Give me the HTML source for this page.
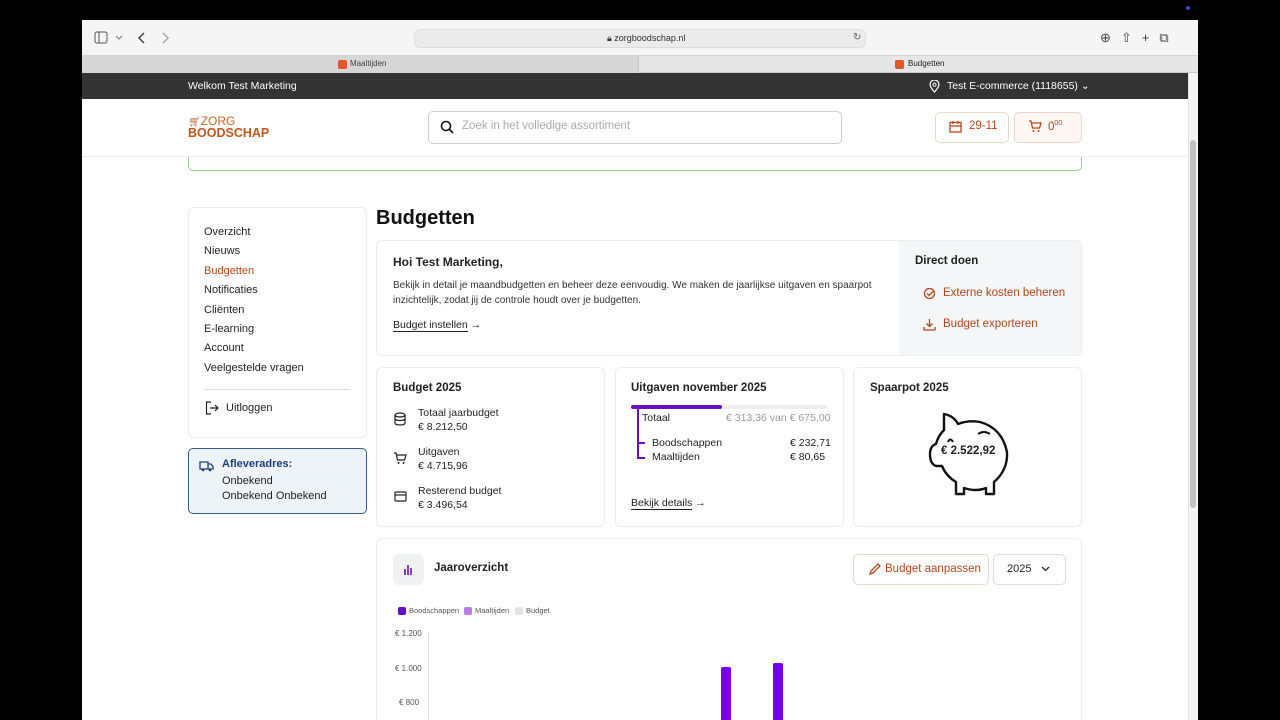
<!DOCTYPE html>
<html><head><meta charset="utf-8"><style>
*{box-sizing:border-box;margin:0;padding:0}
body{width:1280px;height:720px;background:#000;font-family:"Liberation Sans",sans-serif;color:#222;position:relative;overflow:hidden}
.a{position:absolute}
.win{left:82px;top:20px;width:1116px;height:700px;background:#fff;overflow:hidden}
.card{position:absolute;background:#fff;border:1px solid #ececec;border-radius:6px}
.t{font-size:11px}
.nav div{font-size:11px;height:19.4px;color:#222}
.or,.nav div.or{color:#b5451b}
svg{display:block}
</style></head><body>
<div class="a win">
 <div class="a" style="left:0;top:0;width:1116px;height:35px;background:#f5f5f5"></div>
 <svg class="a" style="left:12px;top:11px" width="40" height="14"><rect x="1" y="1" width="12" height="11" rx="2" fill="none" stroke="#555"/><line x1="5" y1="1" x2="5" y2="12" stroke="#555"/><path d="M22 5l3 3 3-3" stroke="#777" fill="none"/></svg>
 <svg class="a" style="left:54px;top:11px" width="36" height="14"><path d="M8 2L3 7l5 5" stroke="#444" stroke-width="1.5" fill="none"/><path d="M27 2l5 5-5 5" stroke="#aaa" stroke-width="1.5" fill="none"/></svg>
 <div class="a" style="left:332px;top:9px;width:452px;height:19px;background:#ebebeb;border-radius:6px;border:1px solid #ddd"></div>
 <div class="a" style="left:525px;top:13px;font-size:9px;color:#333">🔒︎ zorgboodschap.nl</div>
 <div class="a" style="left:771px;top:12px;font-size:10px;color:#666">↻</div>
 <div class="a" style="left:1018px;top:10px;font-size:13px;color:#444;letter-spacing:10px">⊕⇧+⧉</div>
 <div class="a" style="left:0;top:35px;width:1116px;height:18px;background:#e6e6e6;border-top:1px solid #d4d4d4;border-bottom:1px solid #ccc"></div>
 <div class="a" style="left:0;top:35px;width:557px;height:18px;background:#d6d6d6;border-right:1px solid #c8c8c8"></div>
 <div class="a" style="left:256px;top:40px;width:9px;height:9px;background:#e2572a;border-radius:2px"></div>
 <div class="a" style="left:268px;top:39px;font-size:8px;color:#444">Maaltijden</div>
 <div class="a" style="left:813px;top:40px;width:9px;height:9px;background:#e2572a;border-radius:2px"></div>
 <div class="a" style="left:826px;top:39px;font-size:8px;color:#222">Budgetten</div>
 <div class="a" style="left:0;top:53px;width:1106px;height:26px;background:#333"></div>
 <div class="a" style="left:106px;top:60px;font-size:10.5px;color:#fff">Welkom Test Marketing</div>
 <svg class="a" style="left:847px;top:60px" width="11" height="13"><path d="M5.5 12C2 8 1 6 1 4.5a4.5 4.5 0 0 1 9 0C10 6 9 8 5.5 12z" fill="none" stroke="#fff" stroke-width="1.2"/><circle cx="5.5" cy="4.7" r="1.6" fill="none" stroke="#fff"/></svg>
 <div class="a" style="left:865px;top:60px;font-size:10.5px;color:#fff">Test E-commerce (1118655) ⌄</div>
 <div class="a" style="left:1106px;top:53px;width:10px;height:647px;background:#f4f4f4;border-left:1px solid #e4e4e4"></div>
 <div class="a" style="left:1108px;top:120px;width:6px;height:368px;background:#c2c2c2;border-radius:3px"></div>
 <div class="a" style="left:0;top:79px;width:1106px;height:58px;background:#fff;border-bottom:1px solid #eee;z-index:2"></div>
 <div class="a" style="left:106px;top:96px;z-index:3;line-height:11px">
  <div style="font-size:12px;color:#c8662a"><span style="font-size:10px">🛒︎</span>ZORG</div>
  <div style="font-size:12.5px;font-weight:bold;color:#c0561f">BOODSCHAP</div></div>
 <div class="a" style="left:346px;top:91px;width:414px;height:33px;border:1px solid #ccc;border-radius:5px;z-index:3"></div>
 <svg class="a" style="left:358px;top:100px;z-index:3" width="14" height="14"><circle cx="6" cy="6" r="4.5" fill="none" stroke="#111" stroke-width="1.6"/><path d="M9.5 9.5l3.5 3.5" stroke="#111" stroke-width="1.6"/></svg>
 <div class="a" style="left:380px;top:100px;font-size:11.5px;color:#aaa;z-index:3">Zoek in het volledige assortiment</div>
 <div class="a" style="left:853px;top:92px;width:74px;height:31px;border:1px solid #ecd6cc;border-radius:5px;z-index:3"></div>
 <svg class="a" style="left:867px;top:100px;z-index:3" width="13" height="13"><rect x="1" y="2.5" width="11" height="9.5" fill="none" stroke="#b5451b" stroke-width="1.3"/><path d="M1 6h11M4 1v3M9 1v3" stroke="#b5451b" stroke-width="1.3"/></svg>
 <div class="a or" style="left:887px;top:100px;font-size:11.5px;z-index:3">29-11</div>
 <div class="a" style="left:932px;top:92px;width:68px;height:31px;border:1px solid #ecd6cc;border-radius:5px;background:#fdf6f3;z-index:3"></div>
 <svg class="a" style="left:946px;top:100px;z-index:3" width="14" height="13"><path d="M1 1h2l1.5 7h7l1.5-5H4" fill="none" stroke="#b5451b" stroke-width="1.3"/><circle cx="5.5" cy="11" r="1" fill="#b5451b"/><circle cx="10.5" cy="11" r="1" fill="#b5451b"/></svg>
 <div class="a or" style="left:966px;top:100px;font-size:11.5px;z-index:3">0<sup style="font-size:7px">00</sup></div>
 <div class="a" style="left:106px;top:120px;width:894px;height:31px;border:1px solid #9ad38a;border-radius:5px"></div>

 <div class="card" style="left:106px;top:187px;width:179px;height:231px"></div>
 <div class="a nav" style="left:122px;top:206px">
  <div>Overzicht</div><div>Nieuws</div><div class="or">Budgetten</div><div>Notificaties</div><div>Cliënten</div><div>E-learning</div><div>Account</div><div>Veelgestelde vragen</div></div>
 <div class="a" style="left:122px;top:369px;width:146px;height:1px;background:#ddd"></div>
 <svg class="a" style="left:123px;top:381px" width="14" height="14"><path d="M6 1H1.5v12H6M5 7h8M10 4l3 3-3 3" fill="none" stroke="#222" stroke-width="1.2"/></svg>
 <div class="a t" style="left:144px;top:382px">Uitloggen</div>
 <div class="a" style="left:106px;top:428px;width:179px;height:66px;border:1px solid #3c5a86;border-radius:5px;background:#eef3f8"></div>
 <svg class="a" style="left:117px;top:440px" width="15" height="12"><path d="M1 2h8v7H1zM9 4h3l2 2.5V9H9" fill="none" stroke="#1d3f78" stroke-width="1.3"/><circle cx="4" cy="10" r="1.3" fill="#1d3f78"/><circle cx="11" cy="10" r="1.3" fill="#1d3f78"/></svg>
 <div class="a" style="left:140px;top:438px;font-size:11px;font-weight:bold;color:#1d3f78">Afleveradres:</div>
 <div class="a t" style="left:140px;top:454px;line-height:14.5px">Onbekend<br>Onbekend Onbekend</div>

 <div class="a" style="left:294px;top:187px;font-size:20px;font-weight:bold;color:#111">Budgetten</div>
 <div class="card" style="left:294px;top:220px;width:706px;height:116px;overflow:hidden">
  <div class="a" style="left:522px;top:0;width:184px;height:116px;background:#f4f6f7"></div>
 </div>
 <div class="a" style="left:311px;top:235px;font-size:12px;font-weight:bold">Hoi Test Marketing,</div>
 <div class="a" style="left:311px;top:259px;font-size:10px;line-height:14.5px;color:#333;width:480px">Bekijk in detail je maandbudgetten en beheer deze eenvoudig. We maken de jaarlijkse uitgaven en spaarpot inzichtelijk, zodat jij de controle houdt over je budgetten.</div>
 <div class="a" style="left:311px;top:299px;font-size:10.5px"><span style="border-bottom:1px solid #222">Budget instellen</span> →</div>
 <div class="a" style="left:833px;top:235px;font-size:11.5px;font-weight:bold">Direct doen</div>
 <svg class="a" style="left:841px;top:267px" width="13" height="13"><circle cx="6.5" cy="6.5" r="5" fill="none" stroke="#b5451b" stroke-width="1.3"/><path d="M4 6.5l2 2 5-5" fill="none" stroke="#b5451b" stroke-width="1.3"/></svg>
 <div class="a or" style="left:861px;top:267px;font-size:11.5px">Externe kosten beheren</div>
 <svg class="a" style="left:841px;top:298px" width="13" height="13"><path d="M6.5 1v7M3.5 5.5l3 3 3-3M1 9v3h11V9" fill="none" stroke="#b5451b" stroke-width="1.3"/></svg>
 <div class="a or" style="left:861px;top:298px;font-size:11.5px">Budget exporteren</div>

 <div class="card" style="left:294px;top:347px;width:229px;height:160px"></div>
 <div class="card" style="left:533px;top:347px;width:229px;height:160px"></div>
 <div class="card" style="left:771px;top:347px;width:229px;height:160px"></div>
 <div class="a" style="left:311px;top:362px;font-size:11.5px;font-weight:bold">Budget 2025</div>
 <svg class="a" style="left:312px;top:392px" width="12" height="14"><ellipse cx="6" cy="3" rx="5" ry="2" fill="none" stroke="#222" stroke-width="1.2"/><path d="M1 3v8c0 1.2 2.2 2 5 2s5-.8 5-2V3M1 6.5c0 1.2 2.2 2 5 2s5-.8 5-2" fill="none" stroke="#222" stroke-width="1.2"/></svg>
 <div class="a" style="left:336px;top:386px;font-size:10.5px;line-height:14px">Totaal jaarbudget<br>€ 8.212,50</div>
 <svg class="a" style="left:311px;top:432px" width="14" height="13"><path d="M1 1h2l1.5 7h7l1.5-5H4" fill="none" stroke="#222" stroke-width="1.2"/><circle cx="5.5" cy="11" r="1" fill="#222"/><circle cx="10.5" cy="11" r="1" fill="#222"/></svg>
 <div class="a" style="left:336px;top:425px;font-size:10.5px;line-height:14px">Uitgaven<br>€ 4.715,96</div>
 <svg class="a" style="left:312px;top:471px" width="13" height="11"><rect x="1" y="1" width="11" height="9" rx="1" fill="none" stroke="#222" stroke-width="1.2"/><path d="M1 4h11" stroke="#222" stroke-width="1.2"/></svg>
 <div class="a" style="left:336px;top:464px;font-size:10.5px;line-height:14px">Resterend budget<br>€ 3.496,54</div>

 <div class="a" style="left:549px;top:362px;font-size:11.5px;font-weight:bold">Uitgaven november 2025</div>
 <div class="a" style="left:549px;top:385px;width:196px;height:4px;background:#eee;border-radius:2px"></div>
 <div class="a" style="left:549px;top:385px;width:91px;height:4px;background:#6a0fc8;border-radius:2px"></div>
 <div class="a" style="left:555px;top:387px;width:2px;height:52px;background:#6a0fc8"></div>
 <div class="a" style="left:555px;top:422px;width:8px;height:2px;background:#6a0fc8"></div>
 <div class="a" style="left:555px;top:437px;width:8px;height:2px;background:#6a0fc8"></div>
 <div class="a" style="left:560px;top:392px;font-size:10.5px">Totaal</div>
 <div class="a" style="left:644px;top:392px;font-size:10.5px;color:#999">€ 313,36 van € 675,00</div>
 <div class="a" style="left:570px;top:417px;font-size:10.5px">Boodschappen</div>
 <div class="a" style="left:708px;top:417px;font-size:10.5px">€ 232,71</div>
 <div class="a" style="left:570px;top:431px;font-size:10.5px">Maaltijden</div>
 <div class="a" style="left:708px;top:431px;font-size:10.5px">€ 80,65</div>
 <div class="a" style="left:549px;top:477px;font-size:10.5px"><span style="border-bottom:1px solid #222">Bekijk details</span> →</div>

 <div class="a" style="left:788px;top:362px;font-size:11.5px;font-weight:bold">Spaarpot 2025</div>
 <svg class="a" style="left:842px;top:388px" width="88" height="88"><path d="M20 22 L20 6 Q30 8 34 16 Q44 12 56 14 Q78 20 83 44 Q84 62 70 74 L70 86 H62 L62 80 Q52 84 40 80 L40 86 H32 L32 74 Q22 68 18 58 L12 58 Q6 56 6 46 Q6 38 12 36 Q14 28 20 22Z" fill="none" stroke="#111" stroke-width="2.4" stroke-linejoin="round"/><path d="M54 26 q6-4 12 0M24 34q2-5 5 0" fill="none" stroke="#111" stroke-width="2"/></svg>
 <div class="a" style="left:859px;top:425px;font-size:11.5px;font-weight:bold">€ 2.522,92</div>

 <div class="card" style="left:294px;top:518px;width:706px;height:200px"></div>
 <div class="a" style="left:311px;top:534px;width:31px;height:31px;background:#f0f1f3;border-radius:6px"></div>
 <svg class="a" style="left:321px;top:544px" width="10" height="11"><path d="M2 5v6M5 1v10M8 4v7" stroke="#6a0fc8" stroke-width="1.6"/></svg>
 <div class="a" style="left:352px;top:542px;font-size:11.5px;font-weight:bold">Jaaroverzicht</div>
 <div class="a" style="left:771px;top:534px;width:136px;height:31px;border:1px solid #ecd6cc;border-radius:5px"></div>
 <svg class="a" style="left:786px;top:543px" width="13" height="13"><path d="M2 11l1-3 7-7 2 2-7 7z" fill="none" stroke="#b5451b" stroke-width="1.3"/></svg>
 <div class="a or" style="left:803px;top:543px;font-size:11.5px">Budget aanpassen</div>
 <div class="a" style="left:911px;top:534px;width:73px;height:31px;border:1px solid #ddd;border-radius:5px"></div>
 <div class="a" style="left:925px;top:543px;font-size:11px">2025</div>
 <svg class="a" style="left:959px;top:546px" width="9" height="6"><path d="M1 1l3.5 3.5L8 1" fill="none" stroke="#222" stroke-width="1.3"/></svg>
 <div class="a" style="left:316px;top:587px;width:8px;height:8px;background:#6a0fc8;border-radius:2px"></div>
 <div class="a" style="left:327px;top:586px;font-size:7.5px;color:#555">Boodschappen</div>
 <div class="a" style="left:382px;top:587px;width:8px;height:8px;background:#b67ce8;border-radius:2px"></div>
 <div class="a" style="left:393px;top:586px;font-size:7.5px;color:#555">Maaltijden</div>
 <div class="a" style="left:433px;top:587px;width:8px;height:8px;background:#e4e4e4;border-radius:2px"></div>
 <div class="a" style="left:444px;top:586px;font-size:7.5px;color:#555">Budget</div>
 <div class="a" style="left:313px;top:609px;font-size:8px;color:#555">€ 1.200</div>
 <div class="a" style="left:313px;top:644px;font-size:8px;color:#555">€ 1.000</div>
 <div class="a" style="left:317px;top:678px;font-size:8px;color:#555">€ 800</div>
 <div class="a" style="left:346px;top:613px;width:1px;height:107px;background:#ddd"></div>
 <div class="a" style="left:639px;top:647px;width:10px;height:80px;background:#7a00ea;border-radius:2px 2px 0 0"></div>
 <div class="a" style="left:691px;top:643px;width:10px;height:80px;background:#7a00ea;border-radius:2px 2px 0 0"></div>
</div>
<div class="a" style="left:1186px;top:6px;width:4px;height:4px;border-radius:50%;background:#3a4ad8"></div>
</body></html>
